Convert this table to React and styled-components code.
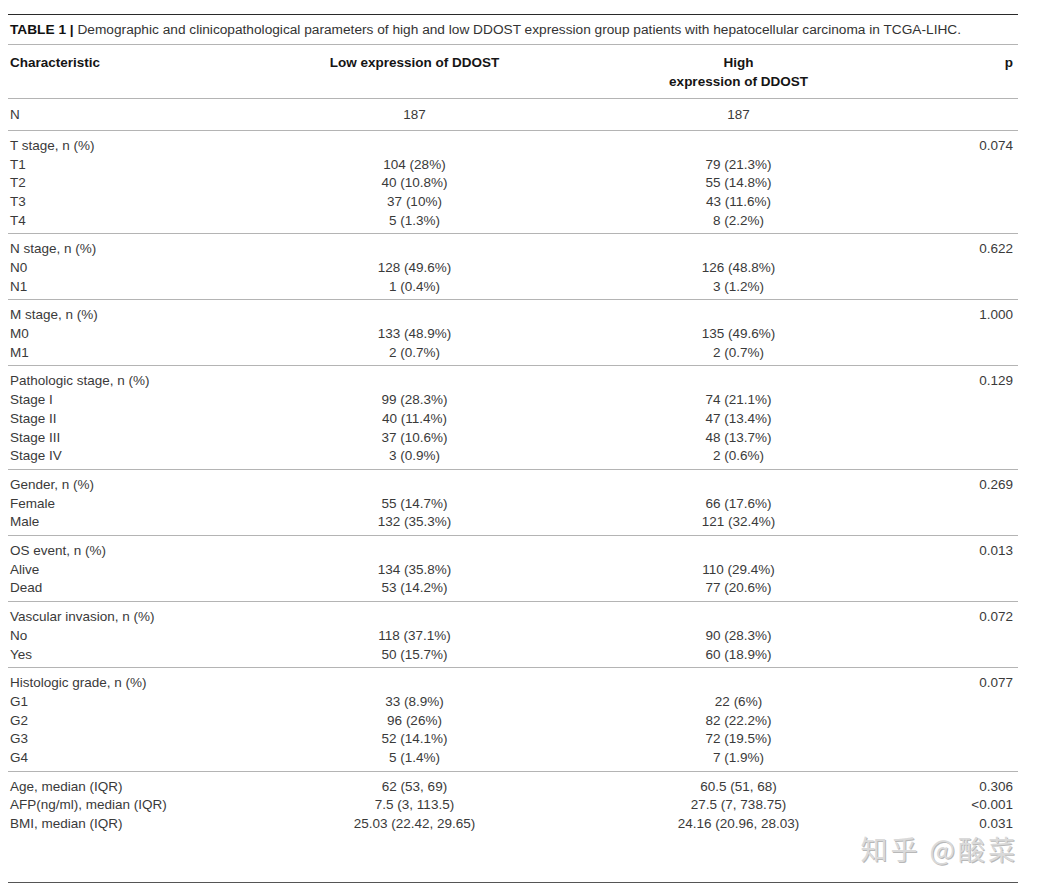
import React from 'react';
import styled, { createGlobalStyle } from 'styled-components';

const groups = [
  {
    title: 'T stage, n (%)',
    p: '0.074',
    rows: [
      ['T1', '104 (28%)', '79 (21.3%)'],
      ['T2', '40 (10.8%)', '55 (14.8%)'],
      ['T3', '37 (10%)', '43 (11.6%)'],
      ['T4', '5 (1.3%)', '8 (2.2%)'],
    ],
  },
  {
    title: 'N stage, n (%)',
    p: '0.622',
    rows: [
      ['N0', '128 (49.6%)', '126 (48.8%)'],
      ['N1', '1 (0.4%)', '3 (1.2%)'],
    ],
  },
  {
    title: 'M stage, n (%)',
    p: '1.000',
    rows: [
      ['M0', '133 (48.9%)', '135 (49.6%)'],
      ['M1', '2 (0.7%)', '2 (0.7%)'],
    ],
  },
  {
    title: 'Pathologic stage, n (%)',
    p: '0.129',
    rows: [
      ['Stage I', '99 (28.3%)', '74 (21.1%)'],
      ['Stage II', '40 (11.4%)', '47 (13.4%)'],
      ['Stage III', '37 (10.6%)', '48 (13.7%)'],
      ['Stage IV', '3 (0.9%)', '2 (0.6%)'],
    ],
  },
  {
    title: 'Gender, n (%)',
    p: '0.269',
    rows: [
      ['Female', '55 (14.7%)', '66 (17.6%)'],
      ['Male', '132 (35.3%)', '121 (32.4%)'],
    ],
  },
  {
    title: 'OS event, n (%)',
    p: '0.013',
    rows: [
      ['Alive', '134 (35.8%)', '110 (29.4%)'],
      ['Dead', '53 (14.2%)', '77 (20.6%)'],
    ],
  },
  {
    title: 'Vascular invasion, n (%)',
    p: '0.072',
    rows: [
      ['No', '118 (37.1%)', '90 (28.3%)'],
      ['Yes', '50 (15.7%)', '60 (18.9%)'],
    ],
  },
  {
    title: 'Histologic grade, n (%)',
    p: '0.077',
    rows: [
      ['G1', '33 (8.9%)', '22 (6%)'],
      ['G2', '96 (26%)', '82 (22.2%)'],
      ['G3', '52 (14.1%)', '72 (19.5%)'],
      ['G4', '5 (1.4%)', '7 (1.9%)'],
    ],
  },
];

const medians = [
  ['Age, median (IQR)', '62 (53, 69)', '60.5 (51, 68)', '0.306'],
  ['AFP(ng/ml), median (IQR)', '7.5 (3, 113.5)', '27.5 (7, 738.75)', '<0.001'],
  ['BMI, median (IQR)', '25.03 (22.42, 29.65)', '24.16 (20.96, 28.03)', '0.031'],
];

export default function App() {
  return (
    <>
      <GlobalStyle />
      <Page>
        <Caption>
          <b>TABLE 1 |</b> Demographic and clinicopathological parameters of high and low DDOST
          expression group patients with hepatocellular carcinoma in TCGA-LIHC.
        </Caption>
        <Header>
          <Cell>Characteristic</Cell>
          <Cell center>Low expression of DDOST</Cell>
          <Cell center>
            High
            <br />
            expression of DDOST
          </Cell>
          <Cell right>p</Cell>
        </Header>
        <Group single>
          <Row>
            <Cell>N</Cell>
            <Cell center>187</Cell>
            <Cell center>187</Cell>
            <Cell right />
          </Row>
        </Group>
        {groups.map((g) => (
          <Group key={g.title}>
            <Row>
              <Cell>{g.title}</Cell>
              <Cell center />
              <Cell center />
              <Cell right>{g.p}</Cell>
            </Row>
            {g.rows.map((r) => (
              <Row key={r[0]}>
                <Cell>{r[0]}</Cell>
                <Cell center>{r[1]}</Cell>
                <Cell center>{r[2]}</Cell>
                <Cell right />
              </Row>
            ))}
          </Group>
        ))}
        <Group last>
          {medians.map((r) => (
            <Row key={r[0]}>
              <Cell>{r[0]}</Cell>
              <Cell center>{r[1]}</Cell>
              <Cell center>{r[2]}</Cell>
              <Cell right>{r[3]}</Cell>
            </Row>
          ))}
          <Watermark>知乎 @酸菜</Watermark>
        </Group>
      </Page>
    </>
  );
}

const GlobalStyle = createGlobalStyle`
  body {
    margin: 0;
    background: #ffffff;
    font-family: "Liberation Sans", Arial, sans-serif;
  }
`;

const Page = styled.div`
  width: 1010px;
  margin: 14px 0 0 8px;
  border-top: 1.5px solid #2a2a2a;
  color: #3a3a3a;
`;

const Caption = styled.div`
  height: 29px;
  line-height: 30px;
  font-size: 13.7px;
  color: #333;
  padding-left: 2px;
  border-bottom: 1px solid #b4b4b4;
  white-space: nowrap;

  b {
    color: #111;
  }
`;

const Row = styled.div`
  display: grid;
  grid-template-columns: 244px 328px 320px 118px;
  line-height: 18.75px;
  font-size: 13.5px;
`;

const Header = styled(Row)`
  padding: 8px 0 7px;
  line-height: 19px;
  font-weight: bold;
  color: #151515;
  border-bottom: 1px solid #b4b4b4;
`;

const Cell = styled.div`
  padding: 0 5px 0 2px;
  text-align: ${(p) => (p.right ? 'right' : p.center ? 'center' : 'left')};
  white-space: nowrap;
`;

const Group = styled.div`
  position: relative;
  padding: ${(p) => (p.single ? '7px 0 5px' : '6px 0 2.8px')};
  height: ${(p) => (p.last ? '111px' : 'auto')};
  box-sizing: border-box;
  border-bottom: ${(p) => (p.last ? '1.5px solid #555' : '1px solid #b4b4b4')};
`;

const Watermark = styled.div`
  position: absolute;
  right: 0;
  top: 64px;
  font-family: "Noto Sans CJK SC", "Liberation Sans", sans-serif;
  font-size: 27px;
  line-height: 26px;
  color: #dadada;
  text-shadow: 1px 1px 0 #b8b8b8;
  letter-spacing: 3px;
  white-space: nowrap;
`;
